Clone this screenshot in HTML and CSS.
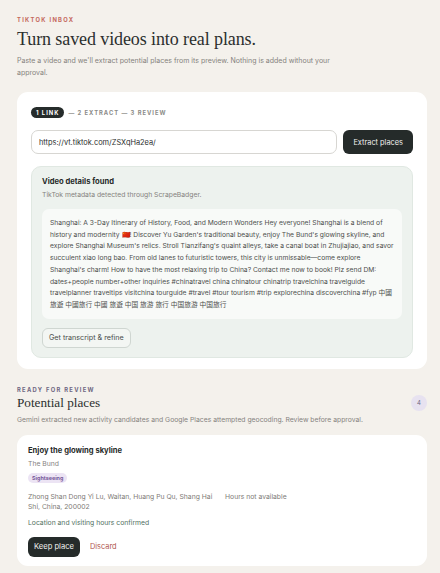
FILE: index.html
```html
<!DOCTYPE html>
<html lang="en">
<head>
  <meta charset="UTF-8" />
  <meta name="viewport" content="width=device-width, initial-scale=1.0"/>
  <title>TikTok Inbox</title>
  <link rel="stylesheet" href="styles.css">
</head>
<body>
  <div class="page">
    <header class="intro">
      <p class="eyebrow">TikTok inbox</p>
      <h1>Turn saved videos into real plans.</h1>
      <p class="lead">Paste a video and we'll extract potential places from its preview. Nothing is added without your approval.</p>
    </header>

    <section class="card import">
      <div class="steps">
        <span class="step active">1 Link</span>
        <span class="step">— 2 Extract — 3 Review</span>
      </div>

      <form class="link-form" onsubmit="return false">
        <input type="text" value="https://vt.tiktok.com/ZSXqHa2ea/" />
        <button class="btn dark">Extract places</button>
      </form>

      <div class="found">
        <h3>Video details found</h3>
        <p class="muted">TikTok metadata detected through ScrapeBadger.</p>
        <div class="caption">
          Shanghai: A 3-Day Itinerary of History, Food, and Modern Wonders Hey everyone! Shanghai is a blend of history and modernity 🇨🇳! Discover Yu Garden's traditional beauty, enjoy The Bund's glowing skyline, and explore Shanghai Museum's relics. Stroll Tianzifang's quaint alleys, take a canal boat in Zhujiajiao, and savor succulent xiao long bao. From old lanes to futuristic towers, this city is unmissable—come explore Shanghai's charm! How to have the most relaxing trip to China? Contact me now to book! Plz send DM: dates+people number+other inquiries #chinatravel china chinatour chinatrip travelchina travelguide travelplanner traveltips visitchina tourguide #travel #tour tourism #trip explorechina discoverchina #fyp 中國旅遊 中國旅行 中國 旅遊 中国 旅游 旅行 中国旅游 中国旅行
        </div>
        <button class="btn ghost">Get transcript &amp; refine</button>
      </div>
    </section>

    <section class="review">
      <p class="eyebrow purple">Ready for review</p>
      <div class="review-head">
        <h2>Potential places</h2>
        <span class="count">4</span>
      </div>
      <p class="muted summary">Gemini extracted new activity candidates and Google Places attempted geocoding. Review before approval.</p>

      <div class="card place">
        <h3>Enjoy the glowing skyline</h3>
        <p class="muted">The Bund</p>
        <span class="tag">Sightseeing</span>
        <div class="place-meta">
          <p class="address">Zhong Shan Dong Yi Lu, Waitan, Huang Pu Qu, Shang Hai Shi, China, 200002</p>
          <p class="hours">Hours not available</p>
        </div>
        <p class="confirmed">Location and visiting hours confirmed</p>
        <div class="actions">
          <button class="btn dark">Keep place</button>
          <button class="btn link">Discard</button>
        </div>
      </div>
    </section>
  </div>
</body>
</html>
```

FILE: styles.css
```css
body {
  margin: 0;
  background: #f4f1ec;
  font-family: 'Inter', 'Noto Sans CJK SC', sans-serif;
  color: #2a2e2d;
}

p {
  margin: 0;
}

.page {
  padding: 16px 13px 20px 17px;
}

.eyebrow {
  font-size: 5.8px;
  line-height: 7px;
  font-weight: 700;
  letter-spacing: 1.3px;
  text-transform: uppercase;
  color: #c4685c;
}

.eyebrow.purple {
  color: #6f6782;
}

h1 {
  margin: 5px 0 5px;
  font-family: 'Liberation Serif', serif;
  font-weight: 400;
  font-size: 18px;
  line-height: 22px;
  letter-spacing: -0.1px;
  color: #2b2f2e;
}

.lead {
  font-size: 7px;
  line-height: 12px;
  color: #85827d;
  max-width: 320px;
}

.muted {
  font-size: 6.8px;
  line-height: 11px;
  color: #86837f;
}

.card {
  background: #fff;
  border-radius: 11px;
}

.import {
  margin-top: 13px;
  padding: 15px 14px 11px;
}

.steps {
  display: flex;
  align-items: center;
  gap: 4px;
  font-size: 5.8px;
  font-weight: 700;
  letter-spacing: 1px;
  text-transform: uppercase;
  color: #8b8b88;
}

.step.active {
  background: #262c2b;
  color: #fff;
  border-radius: 6px;
  padding: 2px 5px;
}

.link-form {
  display: flex;
  gap: 6px;
  margin-top: 12px;
}

.link-form input {
  flex: 1;
  height: 24px;
  box-sizing: border-box;
  border: 1px solid #d7d6d2;
  border-radius: 7px;
  padding: 0 7px;
  font-family: inherit;
  font-size: 7.4px;
  color: #2a2e2d;
}

.btn {
  font-family: inherit;
  cursor: pointer;
  border: none;
}

.btn.dark {
  background: #252b2a;
  color: #f1f1ef;
  border-radius: 6px;
  font-size: 7.4px;
  padding: 0 10px;
  height: 24px;
}

.found {
  margin-top: 12px;
  background: #edf2ee;
  border: 1px solid #e0e8e2;
  border-radius: 10px;
  padding: 10px 10px 9px;
}

.found h3,
.place h3 {
  margin: 0 0 2px;
  font-size: 7.6px;
  line-height: 10px;
  font-weight: 700;
  color: #262a29;
}

.caption {
  margin-top: 9px;
  background: #f8faf8;
  border-radius: 7px;
  padding: 8px 6px 8px 8px;
  font-size: 6.72px;
  line-height: 11.7px;
  color: #4d4f4d;
}

.btn.ghost {
  margin-top: 9px;
  height: 20px;
  padding: 0 6px;
  background: #f3f6f3;
  border: 1px solid #cfd6d1;
  border-radius: 6px;
  font-size: 7.2px;
  color: #4a4d4b;
}

.review {
  margin-top: 17px;
}

.review-head {
  display: flex;
  align-items: center;
  justify-content: space-between;
  margin: 2px 0 3px;
}

h2 {
  margin: 0;
  font-family: 'Liberation Serif', serif;
  font-weight: 400;
  font-size: 13.2px;
  line-height: 16px;
  color: #2b2f2e;
}

.count {
  width: 16px;
  height: 16px;
  border-radius: 50%;
  background: #e7e2f0;
  color: #6f6782;
  font-size: 6px;
  display: flex;
  align-items: center;
  justify-content: center;
}

.summary {
  margin-top: 1px;
}

.place {
  margin-top: 10px;
  padding: 11px 11px 9px;
}

.tag {
  display: block;
  width: fit-content;
  margin-top: 4px;
  padding: 0 4px;
  height: 10px;
  line-height: 10px;
  border-radius: 6px;
  background: #ece4f4;
  color: #76589a;
  font-size: 5.4px;
  font-weight: 700;
}

.place-meta {
  display: flex;
  gap: 11px;
  margin-top: 9px;
  font-size: 6.8px;
  line-height: 10px;
  color: #7e7b77;
}

.address {
  width: 186px;
}

.confirmed {
  margin-top: 5px;
  font-size: 6.8px;
  line-height: 11px;
  color: #52715f;
}

.actions {
  display: flex;
  align-items: center;
  gap: 10px;
  margin-top: 9px;
}

.actions .btn.dark {
  height: 20px;
  font-size: 7.6px;
  padding: 0 6px;
}

.btn.link {
  background: none;
  padding: 0;
  font-size: 7.4px;
  color: #b0564e;
}
```
